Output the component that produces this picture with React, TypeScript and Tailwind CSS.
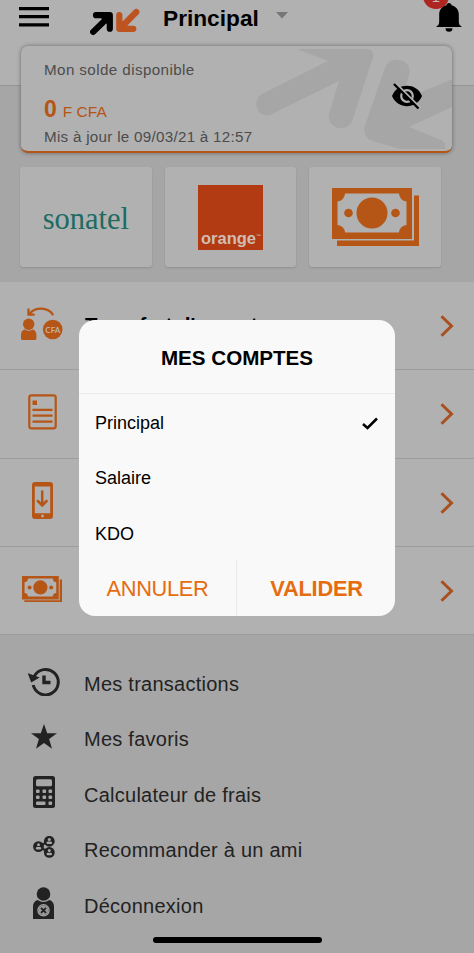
import type { ReactNode } from 'react';

const ORANGE = '#b55516';

const Banknotes = ({ className }: { className?: string }) => (
  <svg viewBox="0 0 87 58" className={className} fill="none">
    <path d="M82 7.500h5V58H5v-5.500h77z" fill={ORANGE} />
    <path
      fillRule="evenodd"
      fill={ORANGE}
      d="M0 0h80v51H0zM13 5.500a8 8 0 0 1-7.500 8v23.500a8 8 0 0 1 7.500 7.500h54a8 8 0 0 1 7.500-7.500V13.500a8 8 0 0 1-7.500-8z"
    />
    <circle cx="40" cy="25" r="15.500" fill={ORANGE} />
    <circle cx="16.500" cy="25" r="4.300" fill={ORANGE} />
    <circle cx="63.500" cy="25" r="4.300" fill={ORANGE} />
  </svg>
);

const TransferIcon = () => (
  <svg viewBox="20 305 44 36" className="mb-[5px] h-9 w-11" fill={ORANGE}>
    <path d="M52.700 314.300c-5-7.200-17-7.500-23-.8" fill="none" stroke={ORANGE} strokeWidth="2.300" strokeLinecap="round" />
    <path d="M28.500 309.500v5.200h5.200" fill="none" stroke={ORANGE} strokeWidth="2.300" strokeLinecap="round" />
    <circle cx="28.700" cy="324.200" r="5.700" />
    <path d="M21 338.500v-3.500c0-3.500 1.800-5.200 3.800-5.500 2.600 1.600 5.200 1.600 7.800 0 2 .3 3.800 2 3.800 5.500v3.500q0 1.500-1.500 1.500H22.500q-1.500 0-1.500-1.500z" />
    <circle cx="52.700" cy="329.500" r="9.800" />
    <text x="52.800" y="332.500" textAnchor="middle" fontSize="8" fontWeight="bold" fontFamily="Lato, sans-serif" fill="#c4b0a2">
      CFA
    </text>
  </svg>
);

const BillIcon = () => (
  <svg viewBox="0 0 29 36" className="mb-[3px] h-9 w-[29px]" fill="none" stroke={ORANGE} strokeWidth="2.200">
    <rect x="1.300" y="1.300" width="26.400" height="33" rx="2" />
    <rect x="4.500" y="6.500" width="4.500" height="4.500" fill={ORANGE} stroke="none" />
    <path d="M4.500 15.800h20M4.500 21.700h20M4.500 27.700h20" />
  </svg>
);

const PhoneIcon = () => (
  <svg viewBox="0 0 21 37" className="mb-[3px] h-[37px] w-[21px]" fill="none">
    <path fillRule="evenodd" fill={ORANGE} d="M3 0h15a3 3 0 0 1 3 3v31a3 3 0 0 1-3 3H3a3 3 0 0 1-3-3V3a3 3 0 0 1 3-3zM2.800 4.500v26.800h15.400V4.500z" />
    <circle cx="10.500" cy="34" r="1.400" fill="#b1b1b1" />
    <path d="M10.200 9.500v13.500M5.800 19l4.400 4.400L14.600 19" stroke={ORANGE} strokeWidth="2.500" strokeLinecap="round" />
  </svg>
);

const HistoryIcon = () => (
  <svg viewBox="0 0 32 30" className="h-[30px] w-8" fill="none" stroke="#222">
    <path d="M6.200 10.500A12.700 12.700 0 1 1 5.200 19" strokeWidth="3" />
    <path d="M1 8.500l2.600 7 6.300-3.800z" fill="#222" stroke="#222" strokeWidth="1.500" />
    <path d="M16 9.500v7h6.500" strokeWidth="3.400" />
  </svg>
);

const StarIcon = () => (
  <svg viewBox="0 0 26 25" className="h-[25px] w-[26px]" fill="#222">
    <path d="M13 0l3.200 9.200H26l-7.900 5.900 2.900 9.700-8-5.700-8 5.700 2.900-9.700L0 9.200h9.800z" />
  </svg>
);

const CalculatorIcon = () => (
  <svg viewBox="0 0 22 32" className="h-8 w-[22px]" fill="#a6a6a6">
    <rect width="22" height="32" rx="2.500" fill="#222" />
    <rect x="3" y="3.200" width="16" height="7" rx="1.500" />
    {[13.5, 19.5].map((y) =>
      [3, 9.5, 15.5].map((x) => <rect key={`${x}-${y}`} x={x} y={y} width="3.600" height="3.600" rx="1" />)
    )}
    <rect x="3" y="25.600" width="9.500" height="3.400" rx="1" />
    <rect x="15.500" y="25.600" width="3.600" height="3.400" rx="1" />
  </svg>
);

const FriendsIcon = () => (
  <svg viewBox="0 0 22 22" className="h-[22px] w-[22px]" fill="#222">
    <path d="M5.500 10.500L16.500 5M5.500 10.500L16.500 16.500" stroke="#222" strokeWidth="2" />
    {[
      [5.5, 10.6],
      [16.3, 5.3],
      [16.3, 16.4],
    ].map(([x, y]) => (
      <g key={y}>
        <circle cx={x} cy={y} r="5.400" />
        <circle cx={x} cy={y - 1.8} r="1.500" fill="#a6a6a6" />
        <rect x={x - 2.7} y={y + 0.3} width="5.400" height="2.500" rx="1.200" fill="#a6a6a6" />
      </g>
    ))}
  </svg>
);

const LogoutIcon = () => (
  <svg viewBox="0 0 21 32" className="h-8 w-[21px]" fill="#222">
    <circle cx="10.500" cy="7" r="6.800" />
    <path d="M0 32V19.500C0 16 2 13.800 4.700 13c3.500 2.600 8 2.600 11.600 0C19 13.800 21 16 21 19.500V32z" />
    <circle cx="10.500" cy="23.300" r="5.600" fill="none" stroke="#a6a6a6" strokeWidth="1.300" />
    <circle cx="10.500" cy="23.300" r="5" fill="#989898" />
    <path d="M8 20.800l5 5M13 20.800l-5 5" stroke="#222" strokeWidth="1.900" />
  </svg>
);

const Watermark = () => (
  <svg viewBox="256 46 196 106" className="absolute right-0 top-0 h-[106px] w-[196px]" fill="#a6a6a6">
    <path d="M297 49h69q8.500 0 7 8.500L352.500 120c-2 6-8 9-13.500 8-7-1.500-11.500-7-10-14l10-33-67 33c-7 3-13 0-15-6-2-7 1-12 6-14.500L328 61z" />
    <path d="M384.500 69c3-9 11-10.500 17-8.500 7 2.500 9.500 8.500 7.500 15L401.500 100 452 79.500v27.500l-43 20 33 13.500q3.500 3.500 3.500 8.500h-41q-6 0-14-2.800l-18-5.200c-7-3-9-8-8-14z" />
  </svg>
);

const HiddenEye = () => (
  <svg viewBox="0 0 32 28" className="h-7 w-8" fill="none">
    <path d="M1 14C4 6.800 10 3.800 16 3.800S28 6.800 31 14c-3 7-9 10.200-15 10.200S4 21 1 14z" fill="#000" />
    <circle cx="16" cy="14" r="5.800" stroke="#b1b1b1" strokeWidth="2.200" />
    <path d="M4.500 1L29.500 26" stroke="#b1b1b1" strokeWidth="2.200" />
    <path d="M3 2L27.500 26.500" stroke="#000" strokeWidth="2.400" />
  </svg>
);

const services: { icon: ReactNode; label?: string }[] = [
  { icon: <TransferIcon />, label: "Transfert d'argent" },
  { icon: <BillIcon /> },
  { icon: <PhoneIcon /> },
  { icon: <Banknotes className="mb-[3px] w-10" /> },
];

const menu = [
  { icon: <HistoryIcon />, label: 'Mes transactions' },
  { icon: <StarIcon />, label: 'Mes favoris' },
  { icon: <CalculatorIcon />, label: 'Calculateur de frais' },
  { icon: <FriendsIcon />, label: 'Recommander à un ami' },
  { icon: <LogoutIcon />, label: 'Déconnexion' },
];

const accounts = ['Principal', 'Salaire', 'KDO'];

const Header = () => (
  <header className="relative h-[46px] bg-[#b1b1b1]">
    <div className="flex items-start">
      <svg viewBox="0 0 30 20" className="ml-[19px] mt-[7px] h-5 w-[30px]" stroke="#000" strokeWidth="3.200">
        <path d="M0 1.600h30M0 9.700h30M0 17.800h30" />
      </svg>
      <svg viewBox="0 0 50 28" className="ml-[41px] mt-2 h-7 w-[50px]" fill="none" strokeWidth="6.200" strokeLinecap="round" strokeLinejoin="round">
        <path d="M3.200 23.900L18 9.500M6 7.200h13.800v13.500" stroke="#000" />
        <path d="M9 8h10.300v10z" fill="#000" />
        <path d="M46.300 4L32 18.500M29.300 7v13.800h14" stroke="#bd5420" />
        <path d="M29.500 10v10.500h10.500z" fill="#bd5420" />
      </svg>
      <h1 className="ml-[22px] mt-[5px] pl-px text-[22.700px] font-bold leading-[26px] text-black">Principal</h1>
      <svg viewBox="0 0 12 7" className="ml-[17px] mt-3 h-[7px] w-3" fill="#777">
        <path d="M0 0h12L6 6.500z" />
      </svg>
    </div>
    <span className="absolute -top-[17px] right-[25px] flex h-[26px] w-[26px] items-end justify-center rounded-full bg-[#ae2620] pb-[5px] text-[15px] leading-[15px] text-[#c9b5b5]">
      1
    </span>
    <svg viewBox="0 0 26 30" className="absolute right-3 top-[3px] h-[30px] w-[26px]" fill="#000">
      <path d="M13 0c1.500 0 2.500 1 2.500 2.200 4.500 1.200 7.300 4.600 7.300 9.300v7c0 2.500.8 4 3.200 5.500H0c2.400-1.500 3.200-3 3.200-5.500v-7c0-4.700 2.800-8.100 7.300-9.300C10.500 1 11.500 0 13 0zM9.500 25.300h7a3.500 3.500 0 0 1-7 0z" />
    </svg>
  </header>
);

const BalanceCard = () => (
  <section className="relative ml-[21px] h-[107px] w-[431px] overflow-hidden rounded-[7px] border-b-2 border-[#b55516] bg-[#b1b1b1] pl-[23px] text-[#4c4c4c] shadow-[0_0_4px_rgba(0,0,0,0.4)]">
    <Watermark />
    <p className="pt-[15px] text-[15.200px] leading-[18px] tracking-[0.400px]">Mon solde disponible</p>
    <p className="mt-[17px] flex items-baseline gap-[6px] leading-[26px] text-[#b55516]">
      <span className="text-[23px] font-bold">0</span>
      <span className="text-[15.500px]">F CFA</span>
    </p>
    <p className="mt-[3px] text-[15.200px] leading-[18px] tracking-[0.280px]">Mis à jour le 09/03/21 à 12:57</p>
    <div className="absolute right-[29px] top-[36px]">
      <HiddenEye />
    </div>
  </section>
);

const Tile = ({ children }: { children: ReactNode }) => (
  <div className="flex h-[100px] flex-1 items-center justify-center rounded-[3px] bg-[#b1b1b1] shadow-[0_1px_2px_rgba(0,0,0,0.14)]">
    {children}
  </div>
);

const AccountsDialog = () => (
  <div className="absolute left-[79px] top-[320px] h-[296px] w-[316px] overflow-hidden rounded-[16px] bg-[#f9f9f9] text-black">
    <h2 className="h-[74px] border-b border-[#ebebeb] pt-[26px] text-center text-[20.600px] font-bold leading-6">MES COMPTES</h2>
    <ul className="h-[166px] pt-px">
      {accounts.map((name, i) => (
        <li key={name} className="flex h-[55.500px] items-center justify-between pl-4 pr-[17px] pt-px text-[18px]">
          {name}
          {i === 0 && (
            <svg viewBox="0 0 16 13" className="h-[13px] w-4" fill="none" stroke="#000" strokeWidth="2.500">
              <path d="M1 7l4.500 4L15 1.500" />
            </svg>
          )}
        </li>
      ))}
    </ul>
    <div className="flex h-14 text-[#e66c10]">
      <button className="w-[158px] border-r border-[#ebebeb] pt-0.5 text-[21.800px] tracking-[-0.300px]">ANNULER</button>
      <button className="flex-1 pl-px pt-0.5 text-[21.800px] font-bold tracking-[-0.200px]">VALIDER</button>
    </div>
  </div>
);

export default function App() {
  return (
    <div className="relative h-[953px] w-[474px] overflow-hidden bg-[#a6a6a6] font-['Liberation_Sans',Arial,sans-serif]">
      <Header />
      <div className="h-[236px] bg-[linear-gradient(#b1b1b1_39px,#969696_39px,#969696_40px,#a6a6a6_40px)]">
        <BalanceCard />
        <div className="ml-5 mt-[14px] flex w-[421px] gap-[13px]">
          <Tile>
            <span className="pt-1 font-['Liberation_Serif',serif] text-[30.500px] leading-[30px] text-[#1d6b62]">sonatel</span>
          </Tile>
          <Tile>
            <div className="flex h-[65px] w-[65px] items-end bg-[#b33b14] pb-[3px] pl-[3px] text-[16.500px] font-bold leading-[18px] text-[#d0bdb3]">
              orange<span className="pb-[7px] text-[5px] leading-[8px]">™</span>
            </div>
          </Tile>
          <Tile>
            <Banknotes className="h-[58px] w-[87px]" />
          </Tile>
        </div>
      </div>

      <ul className="bg-[#b1b1b1]">
        {services.map(({ icon, label }, i) => (
          <li key={i} className="flex h-[88.250px] items-center border-b border-[#9d9d9d]">
            <div className="flex w-[84px] justify-center">{icon}</div>
            <span className="flex-1 pl-px text-[20.400px] font-bold text-black">{label}</span>
            <svg viewBox="0 0 14 22" className="mr-5 mt-px h-[22px] w-[14px]" fill="none" stroke="#a8501f" strokeWidth="3">
              <path d="M1.500 1.200L11.500 11l-10 9.800" />
            </svg>
          </li>
        ))}
      </ul>

      <ul className="mt-[21px]">
        {menu.map(({ icon, label }) => (
          <li key={label} className="flex h-[55.500px] items-center text-[20px] tracking-[0.250px] text-[#222]">
            <div className="-mt-1.5 flex w-[84px] justify-center pl-[3px]">{icon}</div>
            <span>{label}</span>
          </li>
        ))}
      </ul>
      <div className="absolute bottom-[10px] left-[153px] h-[6px] w-[169px] rounded-full bg-black" />
      <AccountsDialog />
    </div>
  );
}
